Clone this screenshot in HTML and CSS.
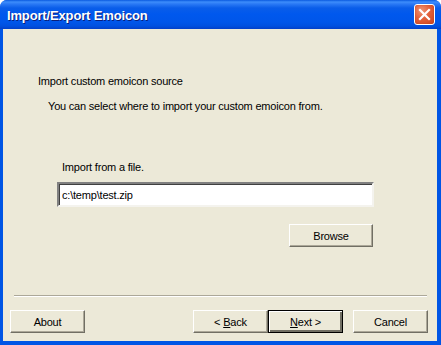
FILE: index.html
```html
<!DOCTYPE html>
<html>
  <head>
    <link rel="stylesheet" href="styles.css">
  </head>
  <body>
  <main class="window">
    <header class="titlebar">
      <span class="title">Import/Export Emoicon</span>
      <button class="close" type="button" aria-label="Close">
        <svg width="13" height="13" viewBox="0 0 13 13">
          <path d="M2 2 L11 11 M11 2 L2 11" stroke="#fff" stroke-width="2.2" stroke-linecap="square"/>
        </svg>
      </button>
    </header>
    <section class="client">
      <div class="content">
        <p class="heading">Import custom emoicon source</p>
        <p class="subheading">You can select where to import your custom emoicon from.</p>
        <div class="file-group">
          <label class="file-label" for="file_path">Import from a file.</label>
          <input id="file_path" class="file-input" type="text" value="c:\temp\test.zip">
          <div class="browse-row">
            <button class="btn browse" type="button">Browse</button>
          </div>
        </div>
      </div>
      <hr class="separator">
      <footer class="buttons">
        <button class="btn" type="button">About</button>
        <span class="spacer"></span>
        <button class="btn" type="button">&lt; <u>B</u>ack</button>
        <button class="btn default" type="button"><u>N</u>ext &gt;</button>
        <button class="btn cancel" type="button">Cancel</button>
      </footer>
    </section>
  </main>
  </body>
</html>
```

FILE: styles.css
```css
* {
  box-sizing: border-box;
}
html, body {
  margin: 0;
  padding: 0;
  background: #fff;
}
body {
  font-family: "Liberation Sans", Arial, sans-serif;
  font-size: 11px;
  letter-spacing: -0.2px;
  color: #000;
}
.window {
  width: 441px;
  height: 345px;
  display: flex;
  flex-direction: column;
  background: #0055e5;
  border-radius: 7px 7px 0 0;
  overflow: hidden;
}
.titlebar {
  height: 29px;
  flex: none;
  display: flex;
  align-items: center;
  padding: 0 6px 0 7px;
  background: linear-gradient(to bottom, #0a5ae0 0px, #3d8dfb 2px, #2a79f5 4px, #0a5de9 8px, #0058ee 14px, #0056ea 22px, #0050e0 26px, #0340c8 29px);
}
.title {
  flex: 1;
  color: #fff;
  font-family: "Liberation Sans", Arial, sans-serif;
  font-weight: bold;
  font-size: 13px;
  letter-spacing: -0.15px;
  text-shadow: 1px 1px 0 #0a1e7a;
  padding-top: 1px;
}
.close {
  width: 21px;
  height: 21px;
  padding: 0;
  margin: 0;
  border: 1px solid #fff;
  border-radius: 3px;
  background: radial-gradient(circle at 35% 30%, #ee9474 0%, #e2603a 45%, #c8421d 100%);
  display: flex;
  align-items: center;
  justify-content: center;
  box-shadow: inset 0 0 1px #a02a10;
}
.close svg {
  display: block;
}
.client {
  flex: 1;
  margin: 0 4px 4px 3px;
  background: #ece9d8;
  display: flex;
  flex-direction: column;
}
.content {
  flex: 1;
}
.heading {
  margin: 46px 0 0 35px;
  line-height: 13px;
}
.subheading {
  margin: 12px 0 0 45px;
  line-height: 13px;
}
.file-group {
  margin: 48px 0 0 54px;
  width: 317px;
}
.file-label {
  display: block;
  margin-left: 5px;
  line-height: 13px;
}
.file-input {
  display: block;
  width: 317px;
  height: 25px;
  margin-top: 8px;
  padding: 0 3px;
  font-family: "Liberation Sans", Arial, sans-serif;
  font-size: 11px;
  letter-spacing: -0.2px;
  color: #000;
  background: #fff;
  border: 2px solid;
  border-color: #808080 #f4f3ee #f4f3ee #808080;
  box-shadow: inset 1px 1px 0 #404040;
  outline: none;
}
.browse-row {
  display: flex;
  justify-content: flex-end;
  margin-top: 17px;
}
.btn {
  width: 75px;
  height: 23px;
  padding: 0;
  font-family: "Liberation Sans", Arial, sans-serif;
  font-size: 11px;
  letter-spacing: -0.2px;
  color: #000;
  background: #ece9d8;
  border: 1px solid;
  border-color: #fff #716f64 #716f64 #fff;
  box-shadow: inset -1px -1px 0 #aca899;
}
.btn u {
  text-decoration-thickness: 1px;
}
.browse {
  width: 84px;
  margin-right: 1px;
}
.default {
  border: 1px solid #000;
  box-shadow: inset 1px 1px 0 #fff, inset -2px -2px 0 #716f64, inset -1px -1px 0 #aca899;
}
.separator {
  margin: 0 10px 0 11px;
  height: 2px;
  border: 0;
  border-top: 1px solid #aca899;
  border-bottom: 1px solid #fff;
}
.buttons {
  display: flex;
  padding: 13px 9px 8px 7px;
}
.spacer {
  flex: 1;
}
.cancel {
  margin-left: 10px;
}
```
